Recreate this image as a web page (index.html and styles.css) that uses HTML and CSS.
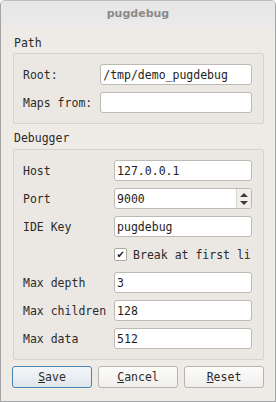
FILE: index.html
```html
<!DOCTYPE html>
<html lang="en">

<head>
  <meta charset="UTF-8">
  <meta name="viewport" content="width=device-width, initial-scale=1.0">
  <title>pugdebug</title>
  <link rel="stylesheet" href="styles.css">
</head>

<body>
  <div id="window">
    <div class="titlebar">pugdebug</div>

    <div class="content">
      <div class="group-title">Path</div>
      <div class="group">
        <label class="field-label">Root:</label>
        <input class="text-input" type="text" value="/tmp/demo_pugdebug" />
        <label class="field-label">Maps from:</label>
        <input class="text-input" type="text" value="" />
      </div>

      <div class="group-title second">Debugger</div>
      <div class="group">
        <label class="field-label">Host</label>
        <input class="text-input" type="text" value="127.0.0.1" />

        <label class="field-label">Port</label>
        <div class="spinbox">
          <span class="spin-value">9000</span>
          <span class="spin-arrows">
            <span class="arrow-up"></span>
            <span class="arrow-down"></span>
          </span>
        </div>

        <label class="field-label">IDE Key</label>
        <input class="text-input" type="text" value="pugdebug" />

        <span></span>
        <div class="check-row">
          <span class="checkbox">&#10004;</span>
          <span class="check-text">Break at first li</span>
        </div>

        <label class="field-label">Max depth</label>
        <input class="text-input" type="text" value="3" />

        <label class="field-label">Max children</label>
        <input class="text-input" type="text" value="128" />

        <label class="field-label">Max data</label>
        <input class="text-input" type="text" value="512" />
      </div>

      <div class="buttons">
        <button class="btn default"><u>S</u>ave</button>
        <button class="btn"><u>C</u>ancel</button>
        <button class="btn"><u>R</u>eset</button>
      </div>
    </div>
  </div>
</body>

</html>
```

FILE: styles.css
```css
body {
  margin: 0;
  font-family: "DejaVu Sans Mono", "Liberation Mono", monospace;
  font-size: 11.5px;
  color: #2b2b2b;
}

#window {
  width: 276px;
  height: 402px;
  box-sizing: border-box;
  border: 1px solid #a4a4a4;
  border-top-color: #bdbdbd;
  border-radius: 5px 5px 0 0;
  background-color: #eeebe7;
  overflow: hidden;
}

.titlebar {
  height: 25px;
  line-height: 25px;
  text-align: center;
  font-family: "DejaVu Sans", sans-serif;
  font-weight: bold;
  font-size: 11px;
  color: #8a8a8a;
  background: linear-gradient(#e6e6e6, #eaeaea);
}

.content {
  padding: 10px 11px 0 11px;
}

.group-title {
  height: 14px;
  line-height: 14px;
  margin-left: 2px;
  margin-bottom: 3px;
}

.group-title.second {
  margin-top: 7px;
  margin-bottom: 4px;
}

.group {
  margin-left: 1px;
  border: 1px solid #d6d2cc;
  border-radius: 2px;
  background-color: #ebe8e3;
  padding: 10px 11px 10px 9px;
  display: grid;
  grid-template-columns: max-content 1fr;
  column-gap: 8px;
  row-gap: 7px;
  align-items: center;
}

.field-label {
  white-space: nowrap;
}

.text-input,
.spinbox {
  height: 21px;
  box-sizing: border-box;
  border: 1px solid #bdb9b3;
  border-radius: 3px;
  background-color: #ffffff;
  font-family: inherit;
  font-size: 11.5px;
  color: #1e1e1e;
  padding: 0 2px;
  margin: 0;
  width: 100%;
  min-width: 0;
  outline: none;
}

.spinbox {
  display: flex;
  align-items: center;
  padding: 0 0 0 2px;
  overflow: hidden;
}

.spin-value {
  flex: 1;
}

.spin-arrows {
  width: 14px;
  height: 100%;
  border-left: 1px solid #d6d2cc;
  background-color: #f1efec;
  display: flex;
  flex-direction: column;
  align-items: center;
  justify-content: center;
  gap: 4px;
}

.arrow-up {
  width: 0;
  height: 0;
  border-left: 4px solid transparent;
  border-right: 4px solid transparent;
  border-bottom: 4px solid #3c3c3c;
}

.arrow-down {
  width: 0;
  height: 0;
  border-left: 4px solid transparent;
  border-right: 4px solid transparent;
  border-top: 4px solid #3c3c3c;
}

.check-row {
  height: 21px;
  display: flex;
  align-items: center;
  white-space: nowrap;
}

.checkbox {
  width: 13px;
  height: 13px;
  flex: none;
  box-sizing: border-box;
  border: 1px solid #aaa6a0;
  border-radius: 2px;
  background-color: #ffffff;
  font-family: "DejaVu Sans", sans-serif;
  font-size: 10px;
  line-height: 11px;
  text-align: center;
  color: #1e1e1e;
  margin-right: 6px;
}

.buttons {
  margin-top: 6px;
  display: grid;
  grid-template-columns: 1fr 1fr 1fr;
  column-gap: 6px;
}

.btn {
  height: 22px;
  border: 1px solid #b7b3ad;
  border-radius: 3px;
  background: linear-gradient(#fcfcfb, #efeeec);
  font-family: inherit;
  font-size: 11.5px;
  color: #2b2b2b;
  padding: 0;
}

.btn.default {
  border-color: #4a83b3;
  background: linear-gradient(#f3f6f8, #dfe6eb);
}
```
